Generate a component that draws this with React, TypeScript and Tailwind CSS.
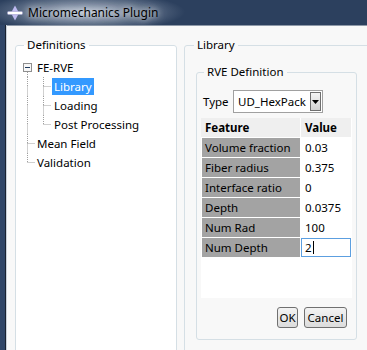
import React from 'react';

type GutterProps = {
  x: number;
  width: number;
  up?: boolean;
  down?: boolean;
  stub?: number;
  box?: boolean;
};

const Gutter: React.FC<GutterProps> = ({ x, width, up, down, stub, box }) => (
  <svg width={width} height={19} className="shrink-0">
    {up && <line x1={x} y1={0} x2={x} y2={box ? 5 : 9.5} stroke="#a0a0a0" strokeDasharray="1 1" />}
    {down && <line x1={x} y1={box ? 14 : 9.5} x2={x} y2={19} stroke="#a0a0a0" strokeDasharray="1 1" />}
    {stub !== undefined && <line x1={x} y1={9.5} x2={stub} y2={9.5} stroke="#a0a0a0" strokeDasharray="1 1" />}
    {box && (
      <>
        <rect x={1.5} y={5.5} width={8} height={8} fill="#f7f7f7" stroke="#8f8f8f" />
        <rect x={3} y={9} width={5} height={1} fill="#1e3b5e" />
      </>
    )}
  </svg>
);

const TreeRow: React.FC<{ children: React.ReactNode }> = ({ children }) => (
  <div className="flex items-center h-[19px]">{children}</div>
);

const rows = [
  ['Volume fraction', '0.03'],
  ['Fiber radius', '0.375'],
  ['Interface ratio', '0'],
  ['Depth', '0.0375'],
  ['Num Rad', '100'],
];

const App: React.FC = () => {
  return (
    <div className="w-[367px] h-[350px] overflow-hidden bg-[#2c405e] font-['Noto_Sans',sans-serif] text-[11.5px] text-black flex flex-col">
      <div className="h-[25px] shrink-0 flex items-center pl-[7px] bg-[radial-gradient(ellipse_100px_20px_at_85px_12px,rgba(195,205,220,0.85),rgba(44,64,94,0))]">
        <svg width="16" height="16" viewBox="0 0 16 16">
          <path d="M8 0.5 L11.5 7 L4.5 7 Z" fill="#bdb9f0" />
          <path d="M8 15.5 L11.5 9 L4.5 9 Z" fill="#bdb9f0" />
          <rect x="0.5" y="6.5" width="15" height="3" rx="1" fill="#ffffff" stroke="#a19fd0" strokeWidth="0.6" />
        </svg>
        <span className="ml-[5px] text-[12px] leading-none [text-shadow:0_0_6px_rgba(255,255,255,0.9),0_0_12px_rgba(255,255,255,0.6)]">
          Micromechanics Plugin
        </span>
      </div>

      <div className="flex flex-1 min-h-0">
        <div className="w-[5px] bg-[#2f4567]" />
        <div className="w-[1px] bg-[#18212f]" />
        <div className="w-[1px] bg-[#c8d0da]" />
        <div className="flex-1 bg-[#f8f8f8] border-t border-[#8e99a8] flex items-start pt-[11px] pl-[8px] gap-[7px] overflow-hidden">
          {/* left: definitions tree */}
          <fieldset className="w-[162px] h-[330px] shrink-0 border border-[#d5dfe5] rounded-[3px] bg-white">
            <legend className="ml-[8px] px-[3px] leading-[16px]">Definitions</legend>
            <div className="pl-[6px] pt-[5px]">
              <TreeRow>
                <Gutter x={5.5} width={13} box down />
                <span className="px-[2px]">FE-RVE</span>
              </TreeRow>
              <TreeRow>
                <Gutter x={5.5} width={13} up down />
                <Gutter x={8.5} width={17} up down stub={16} />
                <span className="px-[2px] h-[17px] flex items-center bg-[#3399ff] text-white">Library</span>
              </TreeRow>
              <TreeRow>
                <Gutter x={5.5} width={13} up down />
                <Gutter x={8.5} width={17} up down stub={16} />
                <span className="px-[2px]">Loading</span>
              </TreeRow>
              <TreeRow>
                <Gutter x={5.5} width={13} up down />
                <Gutter x={8.5} width={17} up stub={16} />
                <span className="px-[2px]">Post Processing</span>
              </TreeRow>
              <TreeRow>
                <Gutter x={5.5} width={13} up down stub={13} />
                <span className="px-[2px]">Mean Field</span>
              </TreeRow>
              <TreeRow>
                <Gutter x={5.5} width={13} up stub={13} />
                <span className="px-[2px]">Validation</span>
              </TreeRow>
            </div>
          </fieldset>

          {/* right: library */}
          <fieldset className="w-[200px] h-[330px] shrink-0 border border-[#d5dfe5] rounded-[3px]">
            <legend className="ml-[9px] px-[3px] leading-[16px]">Library</legend>
            <div className="pl-[11px] pt-[11px]">
              <fieldset className="w-[161px] h-[276px] border border-[#d5dfe5] rounded-[3px]">
                <legend className="ml-[7px] px-[3px] leading-[16px]">RVE Definition</legend>
                <div className="px-[4px] pt-[10px]">
                  <div className="flex items-center h-[23px] pl-[2px]">
                    <span className="w-[30px]">Type</span>
                    <div className="w-[90px] h-[23px] border border-[#a0a0a0] bg-white flex items-center pl-[4px] pr-[1px]">
                      <span>UD_HexPack</span>
                      <div className="ml-auto w-[11px] h-[19px] border border-[#6f6f6f] bg-linear-to-b from-[#f4f4f4] to-[#d2d2d2] flex items-center justify-center">
                        <svg width="7" height="4" viewBox="0 0 7 4">
                          <path d="M0 0 H7 L3.5 4 Z" fill="#000" />
                        </svg>
                      </div>
                    </div>
                  </div>

                  <div className="mt-[5px] w-[151px] h-[180px] bg-white pl-[1px]">
                    <div className="grid grid-cols-[98px_50px] gap-x-[1px] gap-y-[1px] auto-rows-[19px]">
                      <div className="bg-[#efefef] -ml-[1px] pl-[4px] flex items-center font-bold">Feature</div>
                      <div className="bg-[#efefef] pl-[4px] flex items-center font-bold">Value</div>
                      {rows.map(([f, v]) => (
                        <React.Fragment key={f}>
                          <div className="bg-[#a3a3a3] pl-[3px] flex items-center">{f}</div>
                          <div className="bg-white pl-[4px] flex items-center">{v}</div>
                        </React.Fragment>
                      ))}
                      <div className="bg-[#a3a3a3] pl-[3px] flex items-center">Num Depth</div>
                      <div className="bg-white border border-[#5c9fe0] pl-[3px] flex items-center">
                        2<span className="ml-[1px] w-[1px] h-[13px] bg-black" />
                      </div>
                    </div>
                  </div>

                  <div className="mt-[9px] flex justify-end gap-[6px] pr-[5px]">
                    <button className="w-[21px] h-[21px] border border-[#707070] rounded-[3px] bg-linear-to-b from-[#f3f3f3] to-[#dcdcdc] flex items-center justify-center leading-none">
                      OK
                    </button>
                    <button className="w-[43px] h-[21px] border border-[#707070] rounded-[3px] bg-linear-to-b from-[#f3f3f3] to-[#dcdcdc] flex items-center justify-center leading-none">
                      Cancel
                    </button>
                  </div>
                </div>
              </fieldset>
            </div>
          </fieldset>
        </div>
      </div>
    </div>
  );
};

export default App;
